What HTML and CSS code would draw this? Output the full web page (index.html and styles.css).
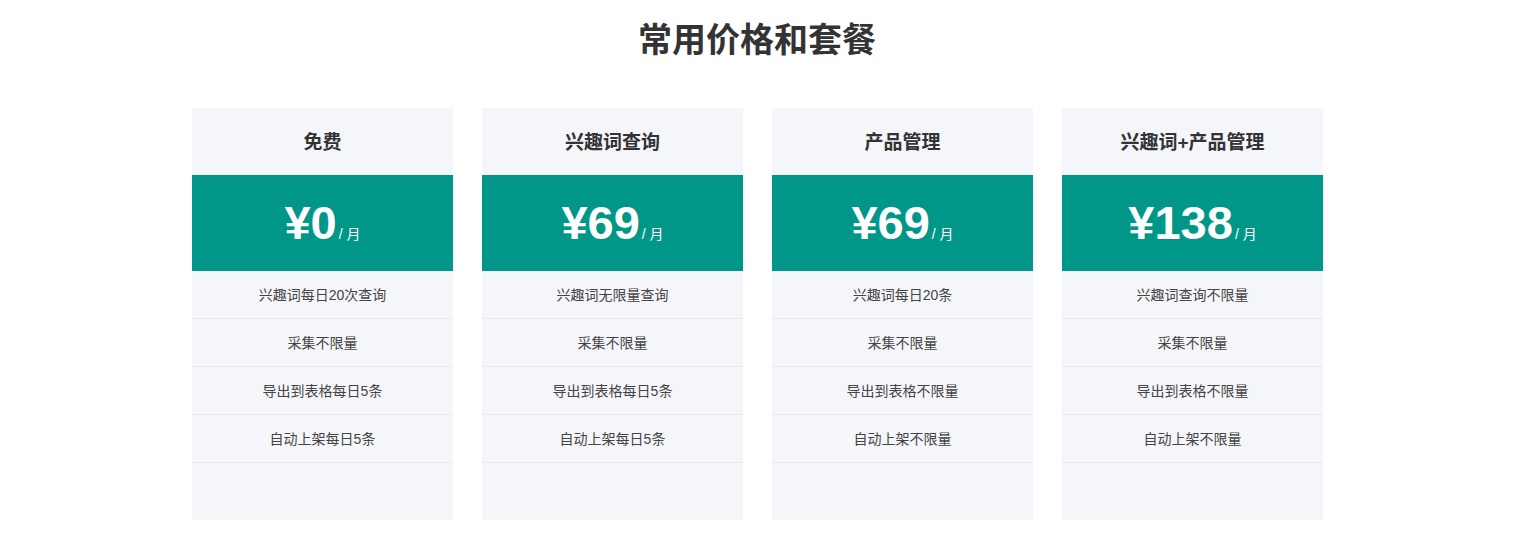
FILE: index.html
```html
<!DOCTYPE html>
<html lang="zh">
<head>
<meta charset="utf-8">
<title>常用价格和套餐</title>
<link rel="stylesheet" href="styles.css">
</head>
<body>
<section class="pricing">
  <h1 class="title">常用价格和套餐</h1>
  <div class="plans">
    <div class="col">
      <div class="plan">
        <div class="plan-name">免费</div>
        <div class="plan-price"><span class="amount">¥0</span><span class="unit">/ 月</span></div>
        <ul class="features">
          <li>兴趣词每日20次查询</li>
          <li>采集不限量</li>
          <li>导出到表格每日5条</li>
          <li>自动上架每日5条</li>
        </ul>
      </div>
    </div>
    <div class="col">
      <div class="plan">
        <div class="plan-name">兴趣词查询</div>
        <div class="plan-price"><span class="amount">¥69</span><span class="unit">/ 月</span></div>
        <ul class="features">
          <li>兴趣词无限量查询</li>
          <li>采集不限量</li>
          <li>导出到表格每日5条</li>
          <li>自动上架每日5条</li>
        </ul>
      </div>
    </div>
    <div class="col">
      <div class="plan">
        <div class="plan-name">产品管理</div>
        <div class="plan-price"><span class="amount">¥69</span><span class="unit">/ 月</span></div>
        <ul class="features">
          <li>兴趣词每日20条</li>
          <li>采集不限量</li>
          <li>导出到表格不限量</li>
          <li>自动上架不限量</li>
        </ul>
      </div>
    </div>
    <div class="col">
      <div class="plan">
        <div class="plan-name">兴趣词+产品管理</div>
        <div class="plan-price"><span class="amount">¥138</span><span class="unit">/ 月</span></div>
        <ul class="features">
          <li>兴趣词查询不限量</li>
          <li>采集不限量</li>
          <li>导出到表格不限量</li>
          <li>自动上架不限量</li>
        </ul>
      </div>
    </div>
  </div>
</section>
</body>
</html>
```
FILE: styles.css
```css
* { box-sizing: border-box; }
body {
  margin: 0;
  background: #fff;
  font-family: "Liberation Sans", Arial, "Noto Sans CJK SC", sans-serif;
  color: #333;
}
.pricing {
  width: 1160px;
  margin: 0 auto;
  padding-top: 17px;
}
.title {
  margin: 0;
  text-align: center;
  font-size: 34px;
  line-height: 46px;
  font-weight: bold;
  color: #333;
}
.plans {
  margin-top: 45px;
  display: grid;
  grid-template-columns: repeat(4, 1fr);
}
.col {
  padding: 0 14px 0 15px;
}
.plan {
  background: #f5f6fa;
  height: 412px;
  display: flex;
  flex-direction: column;
}
.plan-name {
  height: 67px;
  display: flex;
  align-items: center;
  justify-content: center;
  font-size: 19px;
  font-weight: bold;
  color: #333;
  padding-bottom: 3px;
}
.plan-price {
  height: 96px;
  background: #009688;
  color: #fff;
  display: flex;
  align-items: baseline;
  justify-content: center;
  padding-top: 20px;
}
.amount {
  font-size: 47px;
  font-weight: bold;
  line-height: 56px;
}
.unit {
  font-size: 14px;
  margin-left: 2px;
}
.features {
  list-style: none;
  margin: 0;
  padding: 0;
}
.features li {
  height: 48px;
  line-height: 48px;
  text-align: center;
  font-size: 14px;
  color: #444;
  border-bottom: 1px solid #e9eaee;
}
```
